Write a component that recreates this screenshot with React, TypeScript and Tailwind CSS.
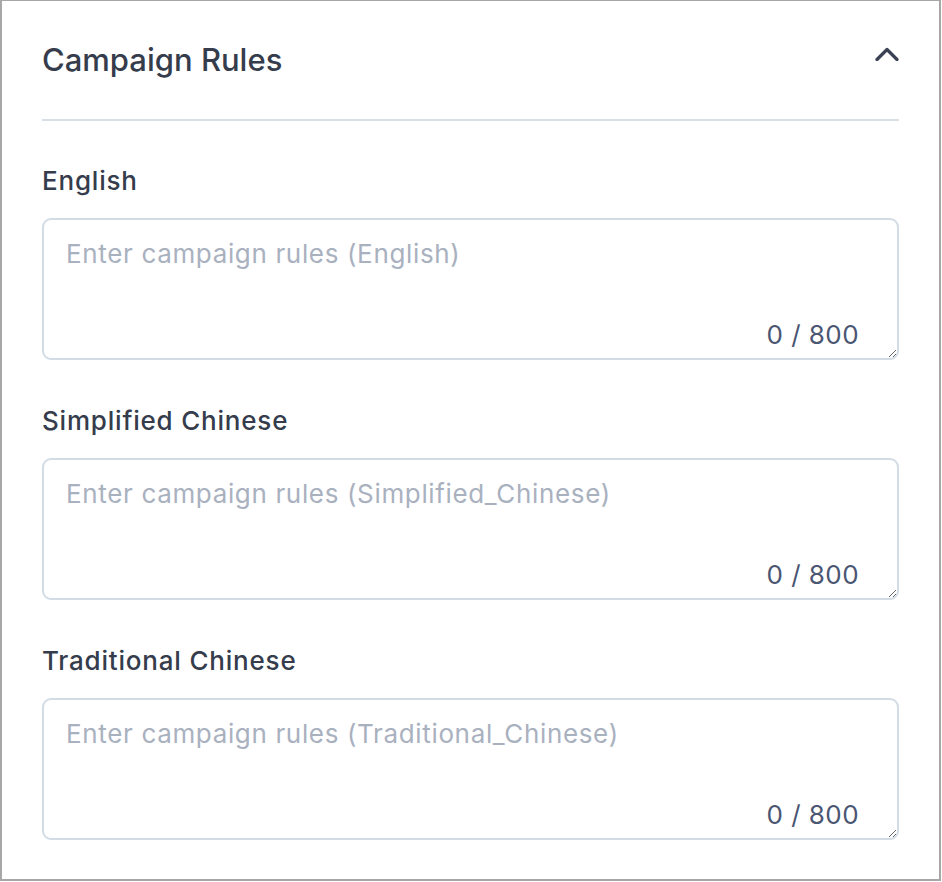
import { useState } from 'react'

const fields = [
  { key: 'English', label: 'English' },
  { key: 'Simplified_Chinese', label: 'Simplified Chinese' },
  { key: 'Traditional_Chinese', label: 'Traditional Chinese' },
]

function RuleField({ label, name }: { label: string; name: string }) {
  const [value, setValue] = useState('')

  return (
    <div className="flex flex-col">
      <label className="text-[26px] leading-[36px] font-medium tracking-[0.8px] text-[#353c4c] mb-[19px]">{label}</label>
      <div className="relative">
        <textarea
          value={value}
          maxLength={800}
          onChange={(e) => setValue(e.target.value)}
          placeholder={`Enter campaign rules (${name})`}
          className="block w-full h-[142px] rounded-[9px] border-2 border-[#d3dbe5] bg-white px-[22px] pt-[16px] pb-[40px] text-[26px] leading-[36px] tracking-[0.65px] text-[#353c4c] placeholder:text-[#a9b1bf] outline-none resize-y"
        />
        <span className="absolute right-[40px] bottom-[9px] text-[26px] leading-[32px] tracking-[0.45px] text-[#4b5673] pointer-events-none">
          {value.length} / 800
        </span>
      </div>
    </div>
  )
}

export default function App() {
  const [open, setOpen] = useState(true)

  return (
    <div className="w-[941px] bg-white border-l-2 border-r-2 border-b-2 border-t border-[#a7a7a7] px-[40px] pt-[39px] pb-[39px] font-['Inter',sans-serif]">
      <div className="flex items-start justify-between h-[40px]">
        <h2 className="text-[31px] leading-[40px] font-medium text-[#353c4c]">Campaign Rules</h2>
        <button onClick={() => setOpen(!open)} className="mt-[7px]" title="Collapse">
          <svg width="24" height="14" viewBox="0 0 24 14" fill="none">
            <path
              d={open ? 'M2 12.5 12 2.5l10 10' : 'M2 1.5l10 10 10-10'}
              stroke="#3b4254"
              strokeWidth="3.2"
              strokeLinecap="round"
              strokeLinejoin="round"
            />
          </svg>
        </button>
      </div>
      <div className="h-[2px] bg-[#d8dfe7] mt-[39px]" />
      {open && (
        <div className="flex flex-col gap-[43px] mt-[42px]">
          {fields.map((f) => (
            <RuleField key={f.key} label={f.label} name={f.key} />
          ))}
        </div>
      )}
    </div>
  )
}
